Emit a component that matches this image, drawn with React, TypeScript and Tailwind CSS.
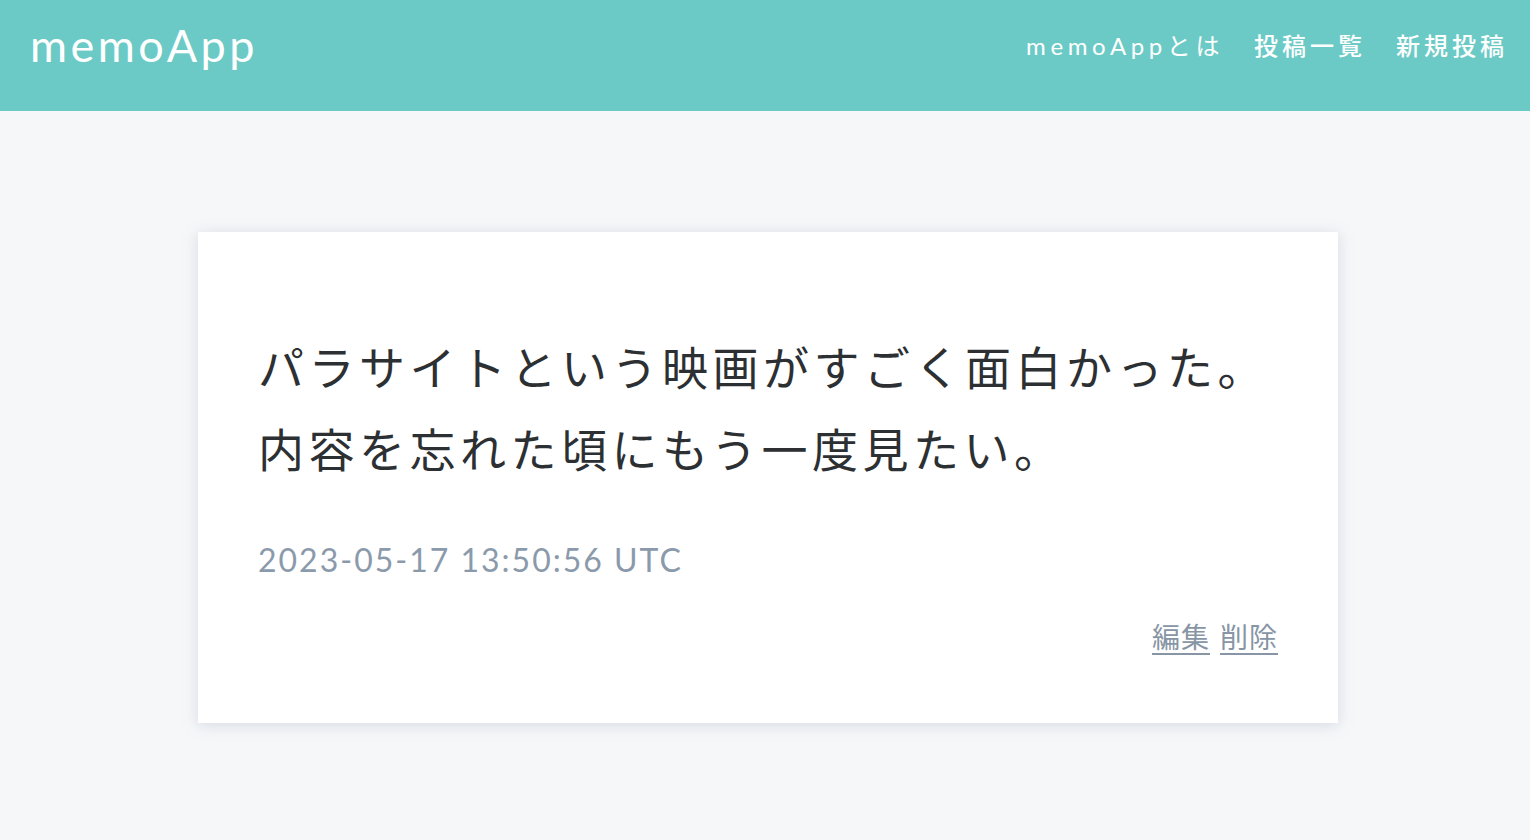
const jp = "font-['Lato','Noto_Sans_CJK_JP',sans-serif]";

const Header = () => {
  return (
    <header className="h-[111px] bg-[#6bcac6] flex items-center justify-between pl-[30px] pr-[22px] pb-[20px]">
      <div className={`${jp} text-white text-[45px] tracking-[3.5px] leading-none`}>memoApp</div>
      <nav className={`${jp} flex items-center gap-[30px] text-white text-[24px] tracking-[4px]`}>
        <a href="#" className="tracking-[4.6px]">memoAppとは</a>
        <a href="#" className="font-medium">投稿一覧</a>
        <a href="#" className="font-medium">新規投稿</a>
      </nav>
    </header>
  );
};

export default function App() {
  return (
    <div className={`min-h-[840px] bg-[#f6f7f9] ${jp}`}>
      <Header />
      <main className="pt-[121px] pl-[6px]">
        <div className="w-[1140px] mx-auto bg-white shadow-[0_2px_14px_rgba(150,165,185,0.35)] pt-[95px] pb-[66px] px-[60px]">
          <p className="text-[#2d3033] text-[46px] leading-[82px] tracking-[4.5px]">
            パラサイトという映画がすごく面白かった。
            <br />
            内容を忘れた頃にもう一度見たい。
          </p>
          <div className="mt-[45px] text-[#8b9aab] text-[32px] leading-[48px] tracking-[2px]">
            2023-05-17 13:50:56 UTC
          </div>
          <div className="mt-[33px] flex justify-end gap-[10px] text-[28px] leading-[40px] tracking-[1px] text-[#8795a5]">
            <a href="#" className="underline underline-offset-[5px] decoration-2">編集</a>
            <a href="#" className="underline underline-offset-[5px] decoration-2">削除</a>
          </div>
        </div>
      </main>
    </div>
  );
}
